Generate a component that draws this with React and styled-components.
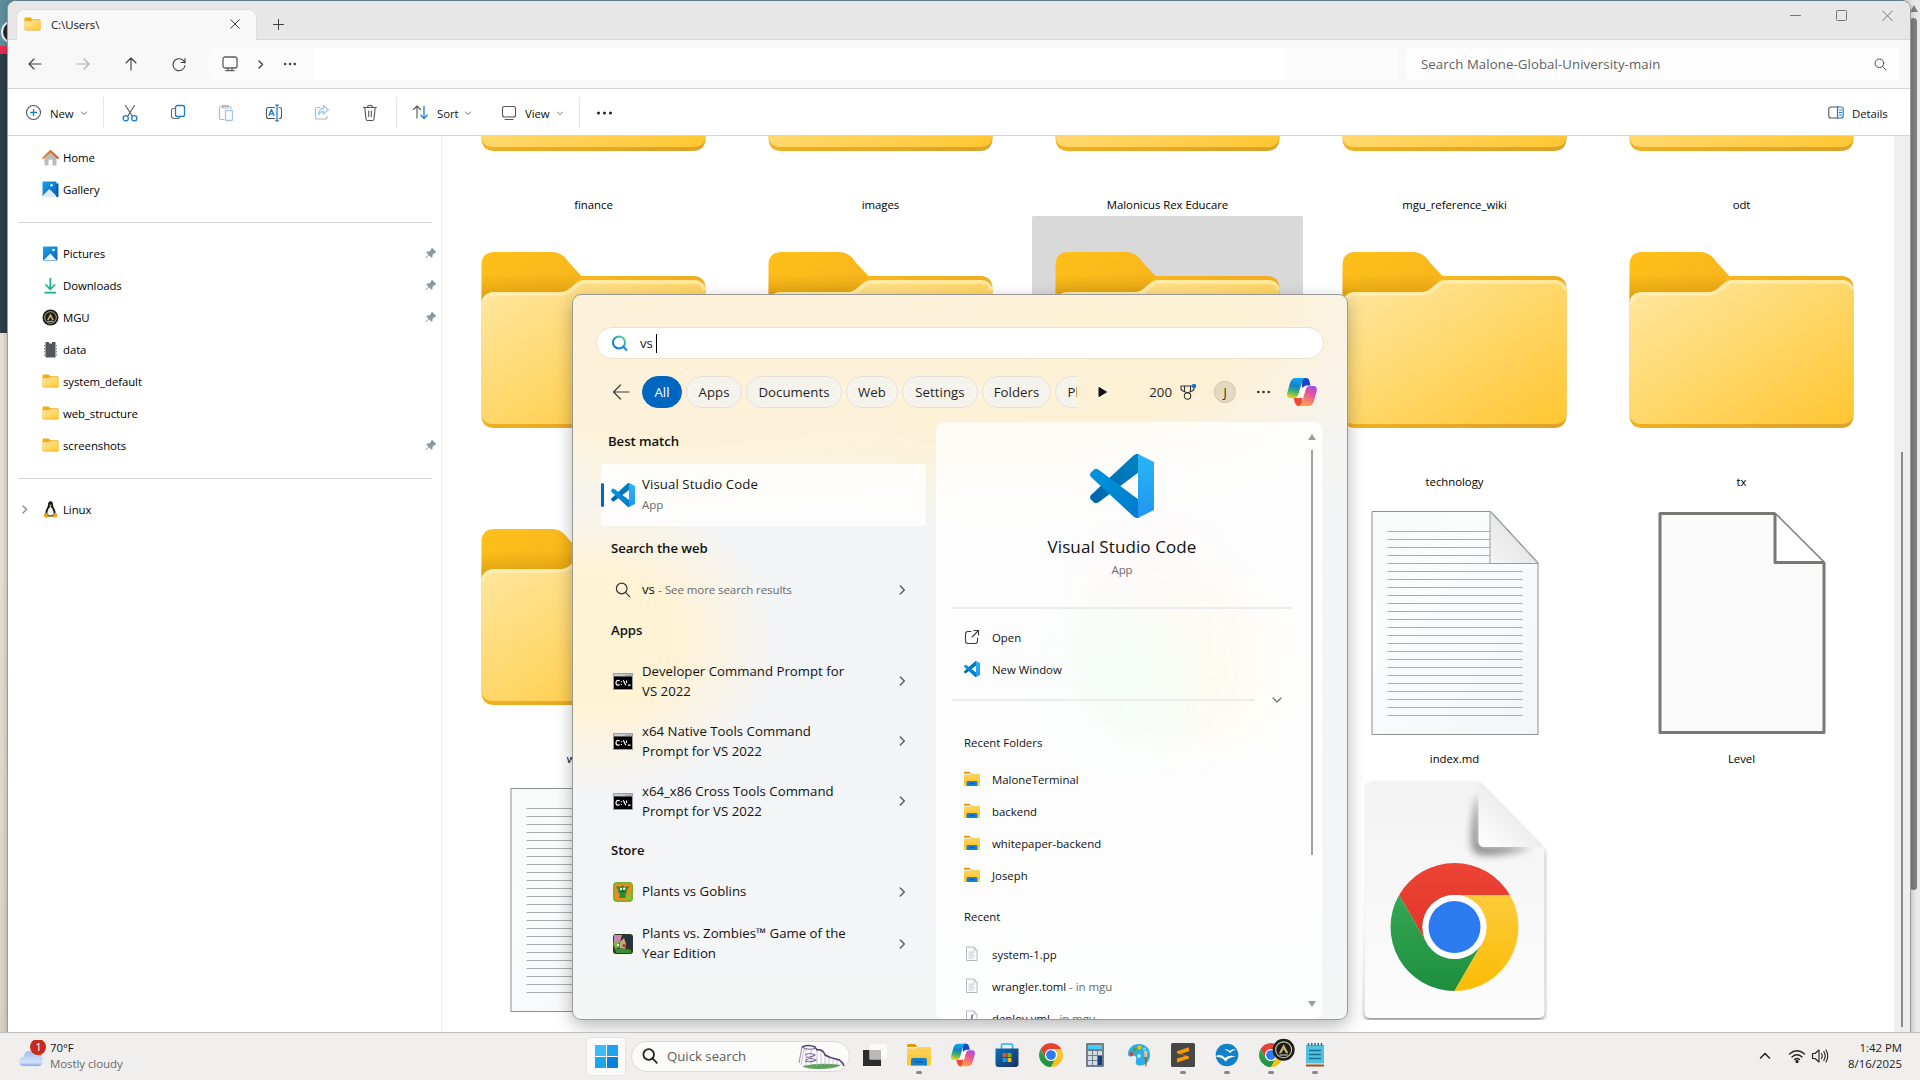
import React from "react";
import styled, { createGlobalStyle } from "styled-components";

const Global = createGlobalStyle`
  * { box-sizing: border-box; }
  html, body { margin: 0; padding: 0; overflow: hidden; }
  body { font-family: "Open Sans", "Noto Sans", sans-serif; font-size: 11.4px; color: #111; }
  svg { display: block; flex: none; }
`;

/* ---------- desktop ---------- */
const Desktop = styled.div`
  width: 1920px; height: 1080px; display: flex; flex-direction: column; overflow: hidden;
`;
const Stage = styled.main`
  position: relative; flex: 1; overflow: hidden; display: flex; justify-content: space-between;
  background: linear-gradient(#5b8f9c 0 46px, #e2304f 46px 54px, #2c3e47 54px 333px, #e6dfd3 333px 560px, #d9d4c6 100%);
`;
const Emblem = styled.div`
  width: 24px; height: 24px; margin: 20px 0 0 1px; border-radius: 50%;
  background: #2a2a2a; border: 2px solid #eee;
`;
const PageScroll = styled.div`
  width: 16px; background: #e9e9e9; padding: 5px 3px 0 6px;
`;
const PageThumb = styled.div`
  width: 7px; height: 872px; margin-top: 6px; border-radius: 4px; background: #808080;
`;

/* ---------- explorer window ---------- */
const Window = styled.section`
  position: absolute; left: 7px; top: 0; width: 1904px; height: 1060px;
  border: 1px solid #9c9c9c; border-top-color: #5f808b; border-radius: 9px 9px 0 0;
  background: #fff; overflow: hidden; display: flex; flex-direction: column;
  box-shadow: 0 0 6px rgba(0,0,0,.25);
`;
const TitleBar = styled.header`
  height: 39px; flex: none; background: #e7e7e7; border-bottom: 1px solid #d6d6d6;
  display: flex; align-items: flex-end; padding-left: 8px;
`;
const Tab = styled.div`
  width: 241px; height: 31px; margin-bottom: -1px; padding: 0 16px 2px 7px; background: #f8f8f8;
  border: 1px solid #dedede; border-bottom: 0;
  border-radius: 8px 8px 0 0; display: flex; align-items: center; gap: 10px;
`;
const TabTitle = styled.span`flex: 1; letter-spacing: -.05px; padding-top: 1px;`;
const NewTab = styled.div`margin: 0 auto 9px 16px;`;
const Captions = styled.div`
  display: flex; gap: 35px; align-self: flex-start; padding: 7px 17px 0 0;
`;
const NavBar = styled.div`
  height: 49px; flex: none; background: #f8f8f8; border-bottom: 1px solid #d6d6d6;
  display: flex; align-items: center; padding: 0 11px 0 3px;
`;
const NavBtn = styled.div`width: 48px; display: flex; justify-content: center; opacity: ${p => (p.$off ? 0.4 : 1)};`;
const Address = styled.div`
  margin-left: 6px; width: 1189px; height: 32px; border-radius: 4px; background: #fcfcfc;
  display: flex; align-items: center; padding-left: 13px; gap: 18px;
`;
const AddressInput = styled.div`width: 971px; height: 32px; background: #fff;`;
const SearchBox = styled.div`
  margin-left: 8px; flex: 1; height: 32px; border-radius: 4px; background: #fdfdfd;
  display: flex; align-items: center; justify-content: space-between; padding: 0 12px 0 15px;
  font-size: 13.2px; color: #616161; letter-spacing: .1px;
`;
const Toolbar = styled.div`
  height: 47px; flex: none; border-bottom: 1px solid #d6d6d6; display: flex; align-items: center; padding-top: 1px;
`;
const ToolItem = styled.div`
  width: ${p => p.$w}px; padding-left: ${p => p.$pl}px; display: flex; align-items: center; gap: 8px; letter-spacing: -.1px;
  & > span { padding-top: 1px; margin-right: -2px; }
`;
const ToolIcons = styled.div`display: flex; width: 292px; padding-left: 2px;`;
const ToolBtn = styled.div`width: 48px; display: flex; justify-content: center; opacity: ${p => (p.$off ? 0.42 : 1)};`;
const Sep = styled.div`width: 1px; height: 31px; background: #e4e4e4;`;
const Body = styled.div`display: flex; flex: 1; min-height: 0;`;
const Sidebar = styled.nav`
  width: 434px; border-right: 1px solid #f1f1f1; padding-top: 5px; display: flex; flex-direction: column;
`;
const SideRow = styled.div`
  height: 32px; display: flex; align-items: center; padding: 0 4px 0 9px; color: #000; letter-spacing: -.08px;
`;
const SideLead = styled.span`width: 25px; display: flex; padding-left: 3px;`;
const SideName = styled.span`flex: 1; padding-left: 4px;`;
const SideRule = styled.div`height: 32px; padding: 17px 9px 0 10px; &::before { content: ""; display: block; height: 1px; background: #d0d0d0; }`;
const Files = styled.div`flex: 1; overflow: hidden; padding-left: 16px;`;
const Grid = styled.div`
  margin-top: -197px; display: grid; grid-template-columns: repeat(5, 271px); column-gap: 16px; grid-auto-rows: 277px;
`;
const Cell = styled.div`
  display: flex; flex-direction: column; align-items: center;
  background: ${p => (p.$on ? "#d9d9d9" : "transparent")}; border-radius: 2px;
`;
const CellName = styled.div`height: 27px; line-height: 31px; color: #000; white-space: nowrap; letter-spacing: -.05px;`;
const ScrollTrack = styled.div`width: 16px; background: #efefef; padding: 316px 0 0 7px;`;
const ScrollThumb = styled.div`width: 2px; height: 575px; background: #898989;`;

/* ---------- search flyout ---------- */
const Flyout = styled.section`
  position: absolute; left: 572px; top: 294px; width: 776px; height: 726px; overflow: hidden;
  border: 1px solid #9b9a96; border-radius: 9px; display: flex; flex-direction: column;
  box-shadow: 0 6px 18px rgba(0,0,0,.28);
  background:
    radial-gradient(ellipse 175px 150px at 25px 345px, #fff2d5 45%, rgba(255,242,213,0) 100%),
    radial-gradient(ellipse 420px 230px at 130px 0px, #fdf2d9 65%, rgba(253,242,217,0) 100%),
    radial-gradient(ellipse 400px 240px at 440px 0px, #fdf1d5 60%, rgba(253,241,213,0) 100%),
    linear-gradient(#f8f5ec 0, #f3f4f5 220px, #f4f5f5 100%);
`;
const QueryField = styled.div`
  margin: 32px 23px 0; height: 32px; flex: none; border: 1px solid #ece1c8; border-radius: 16px; background: #fff;
  display: flex; align-items: center; padding-left: 14px; font-size: 13.2px;
`;
const Query = styled.span`margin-left: 12px; width: 16px; color: #222; letter-spacing: -.2px;`;
const Caret = styled.span`width: 1px; height: 19px; background: #000;`;
const FilterBar = styled.div`
  margin-top: 17px; height: 32px; flex: none; display: flex; align-items: center; padding: 0 30px 0 39px; font-size: 13.2px; color: #1f1f1f;
`;
const Pills = styled.div`
  margin-left: 12px; width: 437px; height: 32px; overflow: hidden; display: flex; gap: 4px;
`;
const Pill = styled.div`
  flex: none; width: ${p => p.$w}px; height: 32px; border-radius: 16px; display: flex; align-items: center; justify-content: center;
  background: ${p => (p.$on ? "#0067c0" : "#f6f3ec")}; color: ${p => (p.$on ? "#fff" : "#1f1f1f")};
  border: 1px solid ${p => (p.$on ? "#0067c0" : "#e4e1dc")}; letter-spacing: .05px;
`;
const Points = styled.div`display: flex; align-items: center; gap: 8px; margin-left: 41px; width: 54px;`;
const Avatar = styled.div`
  width: 22px; height: 22px; margin-left: 11px; border-radius: 50%; background: #e4dac0; border: 1px solid #d3c9ae;
  display: flex; align-items: center; justify-content: center; font-size: 12px;
`;
const Spread = styled.div`margin-left: ${p => p.$ml}px;`;
const Panels = styled.div`flex: 1; min-height: 0; display: flex; margin-top: 14px;`;
const Results = styled.div`width: 363px; padding: 0 10px 0 28px; display: flex; flex-direction: column;`;
const GroupTitle = styled.div`
  height: ${p => p.$h}px; line-height: ${p => p.$lh || p.$h}px; padding-left: ${p => p.$pl || 10}px; flex: none;
  font-size: 13.2px; font-weight: 600; letter-spacing: -.08px; color: #111;
`;
const BestItem = styled.div`
  height: 62px; flex: none; background: rgba(255,255,255,.82); border-radius: 3px; display: flex; align-items: center;
`;
const Accent = styled.div`width: 3px; height: 24px; border-radius: 2px; background: #0067c0; margin-right: 7px;`;
const BestText = styled.div`margin: -2px 0 0 7px; font-size: 13.2px; line-height: 20px; letter-spacing: .1px;`;
const Muted = styled.span`color: ${p => p.$c || "#6a6a6a"}; font-size: 11.5px; letter-spacing: -.08px;`;
const Hit = styled.div`
  height: ${p => p.$h}px; flex: none; padding: 0 19px 0 12px; display: flex; align-items: center;
  font-size: 13.2px; line-height: 20px; letter-spacing: .02px;
`;
const HitIcon = styled.span`width: 20px; display: flex; justify-content: center;`;
const HitText = styled.span`flex: 1; padding-left: 9px; padding-bottom: ${p => p.$up || 0}px; white-space: pre-line;`;
const Preview = styled.div`
  position: relative; width: 386px; border-radius: 8px; display: flex; overflow: hidden;
  background:
    radial-gradient(circle 110px at 195px 250px, rgba(240,253,246,.75), rgba(240,253,246,0)),
    radial-gradient(circle 110px at 265px 250px, rgba(255,250,234,.8), rgba(255,250,234,0)),
    radial-gradient(circle 110px at 220px 180px, rgba(255,247,246,.8), rgba(255,247,246,0)),
    linear-gradient(rgba(255,255,255,.78), rgba(255,255,255,.84));
`;
const PreviewMain = styled.div`width: 356px; padding: 32px 0 0 16px; display: flex; flex-direction: column;`;
const Hero = styled.div`width: 340px; height: 153px; flex: none; display: flex; flex-direction: column; align-items: center;`;
const HeroName = styled.div`margin: 16px 0 2px; font-size: 17px; line-height: 26px; letter-spacing: .1px;`;
const Rule = styled.div`width: ${p => p.$w}px; height: 2px; background: #ececec; flex: none;`;
const RuleRow = styled.div`display: flex; align-items: center; height: 30px; flex: none; gap: 18px;`;
const Action = styled.div`height: 32px; flex: none; display: flex; align-items: center; padding-left: 12px; gap: 12px;`;
const Heading = styled.div`height: ${p => p.$h}px; line-height: ${p => p.$lh || p.$h}px; padding-left: 12px; flex: none;`;
const PreviewScroll = styled.div`width: 24px; margin-left: 8px; padding-top: 12px; display: flex; flex-direction: column; align-items: flex-start;`;
const PreviewThumb = styled.div`width: 2px; height: 405px; margin: 10px 0 146px 11px; background: #a2a2a2; flex: none;`;

/* ---------- taskbar ---------- */
const Taskbar = styled.footer`
  height: 48px; flex: none; display: flex; background: #f0efed; border-top: 1px solid #bfbfbf; position: relative;
`;
const Weather = styled.div`width: 586px; padding: 7px 0 0 18px; display: flex; line-height: 16px;`;
const WeatherText = styled.div`padding-left: 4px; letter-spacing: -.05px;`;
const BadgeCount = styled.text`font: 11.5px "Open Sans", sans-serif; fill: #fff;`;
const StartBtn = styled.div`
  width: 40px; height: 39px; margin-top: 4px; border-radius: 5px; background: #fafafa; border: 1px solid #e6e5e4;
  display: flex; align-items: center; justify-content: center;
`;
const TaskSearch = styled.div`
  width: 219px; height: 31px; margin: 8px 0 0 5px; border-radius: 16px; background: #fbfbfa; border: 1px solid #dcdbd9;
  display: flex; align-items: center; padding: 0 4px 1px 10px; font-size: 13.2px; color: #5d5d5d;
`;
const TaskSearchText = styled.span`flex: 1; padding-left: 9px;`;
const Apps = styled.div`display: flex; margin-left: 3px;`;
const AppSlot = styled.div`
  width: 44px; padding-top: 10px; display: flex; flex-direction: column; align-items: center;
  &::after { content: ""; width: 6px; height: 3px; margin-top: 4px; border-radius: 2px; background: ${p => (p.$run ? "#878787" : "transparent")}; }
`;
const Tray = styled.div`margin-left: auto; display: flex; align-items: flex-start; padding: 14px 18px 0 0; gap: 4px;`;
const Clock = styled.div`width: 62px; margin: -7px 0 0 7px; text-align: right; line-height: 16px; color: #222; white-space: nowrap;`;

/* ---------- drawings ---------- */
const Line = ({ d, s = 16, h, c = "#3c3c3c", w = 1.1, children }) => (
  <svg width={s} height={h || s} viewBox={`0 0 ${s} ${h || s}`} fill="none" stroke={c} strokeWidth={w} strokeLinecap="round" strokeLinejoin="round">
    {d && <path d={d} />}{children}
  </svg>
);
const Chevron = ({ c = "#6b6b6b" }) => <Line s={8} d="M1.5 3 4 5.5 6.5 3" c={c} w={1} />;
const RightChev = ({ s = 10, c = "#5f5f5f", w = 1.5 }) => <Line s={s} d={`M${s * 0.33} 1l${s * 0.4} ${s / 2 - 1}L${s * 0.33} ${s - 1}`} c={c} w={w} />;
const Dots = ({ s = 16, r = 1.2, c = "#333" }) => (
  <svg width={s} height="4" viewBox={`0 0 ${s} 4`} fill={c}><circle cx={r + 1} cy="2" r={r} /><circle cx={s / 2} cy="2" r={r} /><circle cx={s - r - 1} cy="2" r={r} /></svg>
);

const Defs = () => (
  <svg width="0" height="0" aria-hidden="true" style={{ position: "absolute" }}>
    <defs>
      <linearGradient id="fBack" x1="0" y1="0" x2="1" y2="1"><stop offset="0" stopColor="#ffc01a" /><stop offset=".3" stopColor="#f7b61c" /><stop offset="1" stopColor="#dda02a" /></linearGradient>
      <linearGradient id="fFront" x1="0" y1="0" x2="1" y2="1"><stop offset="0" stopColor="#ffe8a3" /><stop offset="1" stopColor="#ffc631" /></linearGradient>
      <linearGradient id="fShade" x1="0" y1="0" x2="0" y2="1"><stop offset="0" stopColor="#c98a0a" stopOpacity="0" /><stop offset="1" stopColor="#c28508" stopOpacity=".65" /></linearGradient>
      <linearGradient id="page" x1="0" y1="0" x2="1" y2="1"><stop offset="0" stopColor="#f8f9f9" /><stop offset=".3" stopColor="#fbfcfc" /><stop offset="1" stopColor="#f3f5f8" /></linearGradient>
      <linearGradient id="curl" x1="0" y1="1" x2="1" y2="0"><stop offset="0" stopColor="#f6f6f6" /><stop offset="1" stopColor="#d8d8d8" /></linearGradient>
      <linearGradient id="cPage" x1="0" y1="0" x2="0" y2="1"><stop offset="0" stopColor="#f3f3f3" /><stop offset="1" stopColor="#fcfcfc" /></linearGradient>
      <linearGradient id="cCurl" x1="0" y1="1" x2="1" y2="0"><stop offset="0" stopColor="#ffffff" /><stop offset="1" stopColor="#dcdcdc" /></linearGradient>
      <linearGradient id="cR" x1="0" y1="0" x2="0" y2="1"><stop offset="0" stopColor="#ee4436" /><stop offset="1" stopColor="#df3428" /></linearGradient>
      <linearGradient id="cG" x1="0" y1="0" x2="0" y2="1"><stop offset="0" stopColor="#34a853" /><stop offset="1" stopColor="#1e8e3e" /></linearGradient>
      <linearGradient id="cY" x1="0" y1="0" x2="0" y2="1"><stop offset="0" stopColor="#fdcb3a" /><stop offset="1" stopColor="#fcbc05" /></linearGradient>
      <linearGradient id="vsR" x1="0" y1="0" x2="0" y2="1"><stop offset="0" stopColor="#29b6f6" /><stop offset="1" stopColor="#2196ef" /></linearGradient>
      <linearGradient id="vsM" x1="0" y1="0" x2="1" y2="1"><stop offset="0" stopColor="#0095dc" /><stop offset="1" stopColor="#007acc" /></linearGradient>
      <linearGradient id="vsD" x1="0" y1="1" x2="1" y2="0"><stop offset="0" stopColor="#0065a9" /><stop offset="1" stopColor="#0083c4" /></linearGradient>
      <linearGradient id="bing" x1="0" y1="1" x2="1" y2="0"><stop offset="0" stopColor="#0a6bd8" /><stop offset=".5" stopColor="#1198d5" /><stop offset="1" stopColor="#5fe08a" /></linearGradient>
      <linearGradient id="cpA" x1=".3" y1="0" x2=".1" y2="1"><stop offset="0" stopColor="#10a5f0" /><stop offset=".35" stopColor="#1680c8" /><stop offset=".62" stopColor="#3aae76" /><stop offset="1" stopColor="#ffd60a" /></linearGradient>
      <linearGradient id="cpB" x1=".8" y1="0" x2=".4" y2="1"><stop offset="0" stopColor="#a04fe8" /><stop offset=".4" stopColor="#e8549a" /><stop offset="1" stopColor="#ffa24a" /></linearGradient>
      <linearGradient id="pic" x1="0" y1="0" x2="1" y2="1"><stop offset="0" stopColor="#1ca4ea" /><stop offset="1" stopColor="#0a5fb8" /></linearGradient>
      <linearGradient id="home" x1="0" y1="0" x2="1" y2="0"><stop offset="0" stopColor="#f08a2c" /><stop offset="1" stopColor="#d4541c" /></linearGradient>
      <linearGradient id="cloud" x1="0" y1="0" x2="0" y2="1"><stop offset="0" stopColor="#9dbcf0" /><stop offset=".75" stopColor="#d3e3fb" /><stop offset="1" stopColor="#7fa9e8" /></linearGradient>
      <linearGradient id="store" x1="0" y1="0" x2="1" y2="1"><stop offset="0" stopColor="#0b6fc0" /><stop offset="1" stopColor="#1d2f5e" /></linearGradient>
      <filter id="soft" x="-50%" y="-50%" width="200%" height="200%"><feGaussianBlur stdDeviation="4" /></filter>
      <filter id="soft2" x="-20%" y="-20%" width="140%" height="140%"><feGaussianBlur stdDeviation="2" /></filter>
    </defs>
  </svg>
);

const FolderBig = () => (
  <svg width="256" height="250" viewBox="-15.5 -36 256 250">
    <path d="M0 13C0 4 5 0 13 0H70C78 0 83 4 87 10L100 24H212C220 24 224 29 224 37V163C224 172 219 176 211 176H13C5 176 0 172 0 163Z" fill="url(#fBack)" />
    <path d="M0 22H99L94 31 84 40H10Q1 41 0 52Z" fill="url(#fShade)" />
    <path d="M0 54C0 45 5 40 13 40H77C84 40 87 38 91 34L95 31Q98 28 103 28H213C220 28 224 33 224 40V160C224 168 220 172 212 172H12C4 172 0 168 0 160Z" fill="url(#fFront)" />
    <path d="M1 52C1 46 6 42 13 42H77C85 42 88 40 92 36L96 33Q99 30 103 30H213C218 30 222 33 223 38" fill="none" stroke="#fff3c4" strokeOpacity=".6" strokeWidth="3.5" />
  </svg>
);
const TextPage = () => (
  <svg width="256" height="250" viewBox=".5 0 256 250">
    <path d="M45.5 18.5H164.5L211.500 69.500V241.500H45.500Z" fill="url(#page)" stroke="#8d9090" />
    {Array.from({ length: 24 }, (_, i) => (
      <path key={i} d={`M61 ${38.500 + i * 8}H${i < 4 ? 163 : 196}`} stroke="#a9abac" />
    ))}
    <path d="M163.500 18.500V70.500H211.500Z" fill="url(#curl)" stroke="#9a9c9c" />
  </svg>
);
const BlankPage = () => (
  <svg width="256" height="250" viewBox=".5 0 256 250">
    <path d="M46.500 20.500H161L210.500 70V239.500H46.500Z" fill="#fafafa" stroke="#787874" strokeWidth="3" strokeLinejoin="round" />
    <path d="M161.500 21V69.500H210" fill="#fff" stroke="#787874" strokeWidth="3" strokeLinejoin="round" />
  </svg>
);
const ChromeMark = () => (
  <g>
    <path d="M-55.400-32A64 64 0 0 1 55.400-32H0A32 32 0 0 0-27.700 16Z" fill="url(#cR)" />
    <path d="M-55.400-32-27.700 16A32 32 0 0 0 27.700 16L0 64A64 64 0 0 1-55.400-32Z" fill="url(#cG)" />
    <path d="M55.400-32A64 64 0 0 1 0 64L27.700 16A32 32 0 0 0 0-32Z" fill="url(#cY)" />
    <circle r="32" fill="#fff" /><circle r="26" fill="#2c7bf0" />
  </g>
);
const ChromePage = () => (
  <svg width="256" height="250" viewBox=".5 0 256 250">
    <path d="M44 14H152L218 82V244Q218 251 212 251H44Q38 251 38 244Z" fill="#000" opacity=".4" filter="url(#soft2)" />
    <path d="M38 18Q38 12 44 12H149Q154 12 157 15L215 74Q218 77 218 82V242Q218 248 212 248H44Q38 248 38 242Z" fill="url(#cPage)" />
    <path d="M152 22V77H206Q180 84 158 84 146 84 146 74 146 45 152 22Z" fill="#000" opacity=".6" filter="url(#soft)" />
    <path d="M152 13V71Q152 77 158 77H216Q216 75 213 72L157 15Q155 13 152 13Z" fill="url(#cCurl)" />
    <g transform="translate(128 157)"><ChromeMark /></g>
  </svg>
);
const VsCode = ({ s }) => (
  <svg width={s} height={s} viewBox="0 0 64 64">
    <path d="M1 41Q-1 43.500 1 45.500L4 48.500Q6.500 50 9 48L49 18V0Q46-.500 43.500 1.500Z" fill="url(#vsD)" />
    <path d="M1 23Q-1 20.500 1 18.500L4 15.500Q6.500 14 9 16L49 46V64Q46 64.500 43.500 62.500Z" fill="url(#vsM)" />
    <path d="M48 0 64 8V56L48 64Z" fill="url(#vsR)" />
  </svg>
);
const Copilot = ({ w, h }) => (
  <svg width={w} height={h} viewBox="0 0 30 28">
    <path d="M15 0H19Q21.500 0 22.500 3L23.500 7.500H19Q16 8 15 11Z" fill="#1b45c9" />
    <path d="M15 28H11Q9 28 8 25L6.500 20H12Q14.500 19 15.500 16Z" fill="#ee4b3c" />
    <path d="M8.500 0H18.500Q16 .5 15 4L11.500 16Q10.500 20 7 20H3.500Q-.5 20 .2 15L3 5Q4.500 0 8.500 0Z" fill="url(#cpA)" />
    <path d="M21.500 28H11.500Q14 27.500 15 24L18.500 12Q19.500 8 23 8H26.500Q30.500 8 29.800 13L27 23Q25.500 28 21.500 28Z" fill="url(#cpB)" />
    <path d="M16.500 9.500Q18 8 20 8 19 9 18.300 12L16 19.500Q15 20 12.500 20 11 20 9.500 19.800 11 18.500 11.600 16.500L13.500 10Z" fill="#fff8ee" />
  </svg>
);
const FolderSmall = () => (
  <svg width="17" height="16" viewBox="0 0 17 16"><path d="M.5 2.500Q.5 1.500 1.500 1.500H6.500Q7.500 1.500 8 3.300H15.500Q16.500 3.300 16.500 4.500V14H.5Z" fill="#f2ac17" /><path d="M.5 6Q.5 5.300 1.500 5.300H6.500L8.500 4.300H15.700Q16.500 4.300 16.500 5V13.200Q16.500 14 15.700 14H1.300Q.5 14 .5 13.200Z" fill="url(#fFront)" /><path d="M1 14.200H16" stroke="#e9a820" strokeWidth=".7" /></svg>
);
const ExplorerIcon = ({ s = 24 }) => (
  <svg width={s} height={s} viewBox="0 0 24 24">
    <path d="M0 2.500Q0 1 1.500 1H8L10.500 4H0Z" fill="#dd9a08" /><path d="M0 5.500H9L11 4H22.500Q24 4 24 5.500V21Q24 22.500 22.500 22.500H1.500Q0 22.500 0 21Z" fill="#ffd050" />
    <path d="M0 12V21Q0 22.500 1.500 22.500H22.500Q24 22.500 24 21V12Z" fill="#fdc533" opacity=".7" />
    <path d="M4 22.500V17Q4 15 6 15H18Q20 15 20 17V22.500Z" fill="#1580d0" /><path d="M8 18.800H16" stroke="#0b5a9d" strokeWidth="1.500" />
  </svg>
);
const HomeIcon = () => (
  <svg width="17" height="17" viewBox="0 0 17 17"><path d="M2.500 8 8.500 2.500 14.500 8V16.500H10.500V11.500Q10.500 10.500 8.500 10.500T6.500 11.500V16.500H2.500Z" fill="#b9bbbd" /><path d="M1.200 9 8.500 2 15.800 9" fill="none" stroke="url(#home)" strokeWidth="2" strokeLinejoin="round" strokeLinecap="round" /></svg>
);
const GalleryIcon = () => (
  <svg width="17" height="17" viewBox="0 0 17 17"><path d="M3 2.500H16.500V16H3Z" fill="#0b5cad" /><path d="M.5.5H14.500V15H.5Z" fill="url(#pic)" /><path d="M1 14.500 7.300 8 14 14.500 14.500 16.500 3 16.500Z" fill="#dcecfc" /><circle cx="9.500" cy="4.300" r="1.200" fill="#fff" /></svg>
);
const PicturesIcon = () => (
  <svg width="17" height="17" viewBox="0 0 17 17"><rect x="1" y="1.500" width="14.500" height="14" rx="1" fill="url(#pic)" /><path d="M2 15 8.300 8.500 14.500 15Z" fill="#eef7ff" /><circle cx="11.500" cy="5" r="1.300" fill="#fff" /></svg>
);
const DownloadIcon = () => (
  <svg width="17" height="17" viewBox="0 0 17 17" fill="none" stroke="#19b08a" strokeWidth="1.700"><path d="M8.300 1V12M3.500 7.500 8.300 12.300 13.100 7.500M2.500 15.700H14" /></svg>
);
const Seal = ({ s = 17 }) => (
  <svg width={s} height={s} viewBox="0 0 17 17"><circle cx="8.500" cy="8.500" r="8" fill="#1c1c1a" /><circle cx="8.500" cy="8.500" r="5.800" fill="none" stroke="#d7cfa8" strokeWidth=".8" /><path d="M5 11 8.500 4.500 12 11H10.300L8.500 8 6.700 11Z" fill="#c8b670" /><path d="M5.500 12.300H11.500" stroke="#ddd" strokeWidth=".8" /></svg>
);
const ChipIcon = () => (
  <svg width="17" height="17" viewBox="0 0 17 17"><path d="M3.500 1H7V2.500H10V1H13.500V16.500H3.500Z" fill="#53565a" /><path d="M2.700 4V15M14.300 4V15" stroke="#8d9196" strokeWidth="1.400" strokeDasharray="1.500 1.500" /></svg>
);
const TuxIcon = () => (
  <svg width="17" height="17" viewBox="0 0 17 17"><path d="M8.500.3Q11 .3 11 4C11 6 14 9 13.600 13L11.500 15.500H5.500L3.400 13C3 9 6 6 6 4Q6 .3 8.500.3Z" fill="#161616" /><path d="M8.500 5.200C10 7 12 9.500 11.600 13Q8.500 16 5.400 13C5 9.500 7 7 8.500 5.200Z" fill="#f6f6f6" /><path d="M6.900 3.800H10.100L8.500 5.700Z" fill="#f2b01e" /><path d="M2.300 12.300 4 11.500 7 15.200 5.500 16.700 1.800 15.700ZM14.700 12.300 13 11.500 10 15.200 11.500 16.700 15.200 15.700Z" fill="#e2a51c" /></svg>
);
const Pin = () => (
  <svg width="12" height="12" viewBox="0 0 12 12" fill="#8f979e"><path d="M7 .8 11.300 5 10 6 9.500 5.900 7.500 8 7.500 10 6.500 10.800 3.900 8.200 1.200 11.200.5 10.700 3.400 7.700 1.200 5.500 2 4.600 4.200 4.500 6.200 2.500 6 2Z" /></svg>
);
const CmdIcon = () => (
  <svg width="20" height="17" viewBox="0 0 20 17"><rect width="20" height="17" fill="#9a9fa4" /><rect x="1" y="1" width="18" height="2.500" fill="#c4cbd3" /><path d="M12.500 2.200H14M15 2.200H16.500M17.300 2.200H18.500" stroke="#6d7680" strokeWidth="1" /><rect x="1" y="3.500" width="18" height="12.500" fill="#000" /><path d="M6.500 8Q5.800 7.200 4.800 7.300 3 7.500 3 9.700 3 12 4.800 12.200 5.800 12.200 6.500 11.500M8.500 8.300V9.300M8.500 11V12M10.300 7.300 12.800 12.200M13.500 7.500V10M15 12.200H17.500" stroke="#fff" strokeWidth="1.200" fill="none" /></svg>
);
const GoblinIcon = () => (
  <svg width="20" height="20" viewBox="0 0 20 20"><rect width="20" height="20" rx="4" fill="#6db52a" /><rect x="1.500" y="1.500" width="17" height="17" rx="3" fill="#f08a1c" /><path d="M3 4 7 5Q9.500 2 12 5L16.500 4 13.500 9Q14.500 11 12.500 12L13 16H6L7 12Q4.500 11 5.500 9Z" fill="#2b8a3e" /><circle cx="8" cy="7" r="1.200" fill="#eaf6d8" /><circle cx="11.200" cy="6.700" r="1.200" fill="#dff" /><path d="M7.500 9.500H12" stroke="#174f24" /><path d="M13 13 18 12 17.500 18H12Z" fill="#7ac52f" /></svg>
);
const ZombieIcon = () => (
  <svg width="20" height="20" viewBox="0 0 20 20"><rect width="20" height="20" rx="3" fill="#2c3a25" /><path d="M1 1H9L7 8 1 10Z" fill="#c988b0" /><path d="M0 9 6 7 7 13 2 15Z" fill="#7fae4b" /><path d="M7 8 11 4 13 10 12 15H7Z" fill="#c7a67a" /><path d="M13 2H19V14L15 12Z" fill="#28304f" /><path d="M2 15 9 14 18 16V19H3Z" fill="#3f8a35" /><circle cx="11" cy="11.500" r="1.500" fill="#b22f2c" /><circle cx="5" cy="11" r="1" fill="#fff" /></svg>
);
const DocIcon = ({ mark }) => (
  <svg width="16" height="16" viewBox="0 0 16 16" fill="none" stroke="#b5b8ba" strokeWidth="1"><path d="M2.500 1H10L13 4V14.500H2.500Z" fill="#fff" /><path d="M10 1V4H13" />{mark ? <path d="M8.500 4.500 7.500 9M7.200 11V12" stroke="#7a4fa0" strokeWidth="1.500" /> : <path d="M4.500 6H11M4.500 8H9.500M4.500 10H11M4.500 12H10" strokeWidth=".8" />}</svg>
);
const Magnifier = ({ s = 16, c = "#333", w = 1.200 }) => (
  <svg width={s} height={s} viewBox="0 0 16 16" fill="none" stroke={c} strokeWidth={w} strokeLinecap="round"><circle cx="6.700" cy="6.500" r="5.300" /><path d="M10.600 10.400 14.800 14.800" /></svg>
);

const blue = "#1b7fd0";
const CutIcon = () => <Line s={16} h={18}><path d="M3.500 1.500 10.500 12.500M12.500 1.500 5.500 12.500" stroke="#555" /><circle cx="3.700" cy="14.300" r="2.600" stroke={blue} strokeWidth="1.300" /><circle cx="12.300" cy="14.300" r="2.600" stroke={blue} strokeWidth="1.300" /></Line>;
const CopyIcon = () => <Line s={16}><path d="M4.500 4.500H3Q1.500 4.500 1.500 6.500V12Q1.500 14.500 4 14.500H8Q9.500 14.500 9.500 13" stroke="#666" /><rect x="5.500" y="1.500" width="9" height="11" rx="2" stroke={blue} strokeWidth="1.300" /></Line>;
const PasteIcon = () => <Line s={16} h={18}><path d="M6 15.500H3Q1.500 15.500 1.500 14V4Q1.500 2.500 3 2.500H11.500Q13 2.500 13 4V5M4.500 1.500H10V4H4.500Z" stroke="#555" /><rect x="7.500" y="6.500" width="7" height="10" rx="1" stroke={blue} strokeWidth="1.300" /></Line>;
const RenameIcon = () => <Line s={18}><path d="M9.500 3.500H3.500Q1.500 3.500 1.500 5.500V12.500Q1.500 14.500 3.500 14.500H9.500M14.500 3.500Q16.500 3.500 16.500 5.500V12.500Q16.500 14.500 14.500 14.500" stroke="#555" /><path d="M12 1.500V16.500M10.500 1.200H13.500M10.500 16.800H13.500M4 11.500 6.500 5.500 9 11.500M4.800 9.800H8.200" stroke={blue} strokeWidth="1.300" /></Line>;
const ShareIcon = () => <Line s={16} h={17}><path d="M6 3.500H3.500Q1.500 3.500 1.500 5.500V13Q1.500 15 3.500 15H11Q13 15 13 13V12" stroke="#555" /><path d="M9.500 1.500 14.500 5.800 9.500 10V7.500Q6 7.500 4.500 11 4.500 5 9.500 4.200Z" stroke={blue} strokeWidth="1.300" /></Line>;
const TrashIcon = () => <Line s={16} h={18}><path d="M1.500 3.500H14.500M5.500 3.500Q5.500 1.200 8 1.200 10.500 1.200 10.500 3.500M2.800 3.500 4 15Q4.200 16.500 5.500 16.500H10.500Q11.800 16.500 12 15L13.200 3.500M6.700 7V12.500M9.300 7V12.500" stroke="#555" /></Line>;
const SortIcon = () => <Line s={17}><path d="M5 14V2M1.500 5.500 5 2 8.500 5.500" stroke="#555" /><path d="M12 2.500V14.500M8.800 11.300 12 14.500 15.200 11.300" stroke={blue} strokeWidth="1.300" /></Line>;
const ViewIcon = () => <Line s={16}><rect x="1.500" y="1.500" width="13" height="10.500" rx="2" stroke="#555" /><path d="M4 14.500H12" stroke="#555" /></Line>;
const MonitorIcon = () => <Line s={16} c="#5c5c5c" w={1.300}><rect x="1" y="1" width="14" height="11" rx="2" /><path d="M6 12.500V14.500M10 12.500V14.500M4 14.700H12" /></Line>;
const DetailsIcon = () => <Line s={16}><path d="M10.500 2H3Q.8 2 .8 4V11Q.8 13 3 13H10.500" stroke="#555" /><path d="M9.500 2H13Q15.200 2 15.200 4V11Q15.200 13 13 13H9.500ZM11.300 5H13.500M11.300 7.500H13.500M11.300 10H13.500" stroke={blue} strokeWidth="1.200" /></Line>;

const Coaster = () => (
  <svg width="47" height="25" viewBox="0 0 47 25" fill="none">
    <path d="M4 22Q24 18 43 21 38 25 20 25 8 25 4 22Z" fill="#5aa55b" />
    <path d="M3 21 6 5M8 22V5M13 22V5M19 22V6M23 21V7M27 21V12M31 21V14M35 21V15M39 21V16M43 21V18" stroke="#c3b0cc" strokeWidth=".8" />
    <path d="M1 19 4 3" stroke="#a98fb4" strokeWidth="1.200" />
    <path d="M4 3Q10 0 17 3L19 6Q25 5 27 11 32 14 38 15 44 16 46 22" stroke="#4a3d6b" strokeWidth="1.500" />
    <path d="M4 3Q10 7 18 4M7 11Q12 8 17 11 13 14 8 13M8 16Q13 13 18 16 13 19 7 17" stroke="#75678f" strokeWidth="1.100" />
  </svg>
);
const WindowsLogo = () => (
  <svg width="23" height="23" viewBox="0 0 23 23"><path d="M0 0H11V11H0Z" fill="#3cbcf7" /><path d="M12 12H23V23H12Z" fill="#0a80da" /><path d="M12 0H23V11H12ZM0 12H11V23H0Z" fill="#1fa3ec" /></svg>
);
const TaskViewIcon = () => (
  <svg width="24" height="24" viewBox="0 0 24 24"><rect x="0" y="7" width="18" height="16" fill="#2c2c2c" /><rect x="6.500" y="1" width="17.500" height="15.500" fill="#fdfdfd" opacity=".75" /><rect x="6.500" y="7" width="11.500" height="9.500" fill="#b9b9b9" /></svg>
);
const StoreIcon = () => (
  <svg width="24" height="24" viewBox="0 0 24 24"><path d="M6.500 6V2.500Q6.500 1 8 1H16Q17.500 1 17.500 2.500V6" fill="none" stroke="#22b3ee" strokeWidth="1.600" /><path d="M.5 5.500H23.500V21Q23.500 24 20.500 24H3.500Q.5 24 .5 21Z" fill="url(#store)" /><path d="M7.500 10H11.500V14H7.500Z" fill="#f25022" /><path d="M12.500 10H16.500V14H12.500Z" fill="#7fba00" /><path d="M7.500 15H11.500V19H7.500Z" fill="#00a4ef" /><path d="M12.500 15H16.500V19H12.500Z" fill="#ffb900" /></svg>
);
const ChromeIcon = ({ seal }) => (
  <svg width="36" height="24" viewBox="-96 -64 192 128" overflow="visible"><ChromeMark />{seal && <g transform="translate(5 -90) scale(7.800)"><Seal s={16} /></g>}</svg>
);
const CalcIcon = () => (
  <svg width="24" height="24" viewBox="0 0 24 24"><rect x="3" y="0" width="18" height="24" rx="1" fill="#717d8a" /><rect x="5" y="2" width="14" height="4" fill="#3fd0f2" />{[0, 1, 2].map(r => [0, 1, 2].map(c => <rect key={`${r}${c}`} x={5 + c * 5} y={8 + r * 5} width="4" height="4" fill={c === 2 && r > 0 ? "#12407c" : "#d3dbe3"} />))}<rect x="15" y="13" width="4" height="9" fill="#12407c" /></svg>
);
const PaintIcon = () => (
  <svg width="24" height="24" viewBox="0 0 24 24"><path d="M12 1C5 1 1 6 1 11 1 14 4 14 6 13 9 12 10 15 9 18 8 21 10 22.500 13 22.500 19 22.500 23 18 23 12S19 1 12 1Z" fill="#2aaeea" /><circle cx="4.500" cy="11" r="2" fill="#d24a2c" /><circle cx="8" cy="6.500" r="2" fill="#4aa238" /><circle cx="12.500" cy="4.500" r="1.900" fill="#f0c21c" /><circle cx="17.500" cy="6" r="1.500" fill="#7fdcff" /><path d="M12 11V15M10 13H14" stroke="#fff" strokeWidth="1.200" /><path d="M17 8H20.500L20 14H17.500Z" fill="#e9c08a" /><path d="M17.500 14H20L19.500 23.500H18.500Z" fill="#a5601f" /></svg>
);
const SublimeIcon = () => (
  <svg width="24" height="24" viewBox="0 0 24 24"><rect width="24" height="24" rx="1.500" fill="#474747" /><path d="M6 8.200 18 4.300V8.200L9.500 11 18 13.600V15.500L6 19.500V15.600L14.500 12.900 6 10.300Z" fill="#ff9800" /></svg>
);
const OfficeIcon = () => (
  <svg width="24" height="24" viewBox="0 0 24 24"><circle cx="12" cy="12" r="11.300" fill="#1181c8" /><path d="M9.500 6.500Q12.500 5.500 14.500 8 17 5.500 21 6.500 17.500 7 15 10 13 7 9.500 6.500ZM1.500 12.500Q7 11 10 15 14 11.500 20.500 13.500 14 13.800 10.500 18.500 7 13.500 1.500 14Z" fill="#fff" /></svg>
);
const NotepadIcon = () => (
  <svg width="24" height="24" viewBox="0 0 24 24"><rect x="3" y="2" width="18" height="19" fill="#54bfe0" /><path d="M3 21H21V23.500H3Z" fill="#9a5210" /><path d="M3 20.500H21V21.500H3Z" fill="#f2f2f2" /><path d="M5.500 0V3M8.800 0V3M12 0V3M15.200 0V3M18.500 0V3" stroke="#1b7390" strokeWidth="1.500" /><path d="M6 7.500H18M6 11.500H18M6 15.500H18" stroke="#12718f" strokeWidth="1.600" /></svg>
);
const WeatherIcon = () => (
  <svg width="28" height="28" viewBox="0 0 28 28"><circle cx="19" cy="13" r="5" fill="#f19a20" /><path d="M6 26Q1 26 1 21.500 1 17.500 5.500 17 6 11 12 11 16.500 11 18 15 24.500 15 25 20.500 25 26 19.500 26Z" fill="url(#cloud)" /><circle cx="20" cy="7" r="8" fill="#c52b1e" /><BadgeCount x="20.500" y="11" textAnchor="middle">1</BadgeCount></svg>
);
const Medal = () => (
  <svg width="17" height="16" viewBox="0 0 17 16" fill="none" stroke="#333" strokeWidth="1.100"><path d="M1 2H14V5Q13.500 6.500 12 7L7.500 9 3 7Q1.500 6.500 1 5ZM4.500 2V7.200M10.500 2V7.200" /><circle cx="7.500" cy="12" r="3.200" /><circle cx="14" cy="2" r="2.200" fill="#0a78d6" stroke="none" /></svg>
);

/* ---------- data ---------- */
const sidebar = [
  ["Home", HomeIcon], ["Gallery", GalleryIcon], null,
  ["Pictures", PicturesIcon, 1], ["Downloads", DownloadIcon, 1], ["MGU", Seal, 1], ["data", ChipIcon],
  ["system_default", FolderSmall], ["web_structure", FolderSmall], ["screenshots", FolderSmall, 1], null,
  ["Linux", TuxIcon, 0, 1],
];
const files = [
  ["finance"], ["images"], ["Malonicus Rex Educare"], ["mgu_reference_wiki"], ["odt"],
  [""], [""], ["", FolderBig, true], ["technology"], ["tx"],
  ["workflows"], [""], [""], ["index.md", TextPage], ["Level", BlankPage],
  ["readme.md", TextPage], ["public_ledger.html", TextPage], ["style.html", TextPage], ["team.html", ChromePage],
];
const pills = [["All", 40], ["Apps", 56], ["Documents", 96], ["Web", 52], ["Settings", 76], ["Folders", 69], ["Photos", 68]];
const devTools = ["Developer Command Prompt for\nVS 2022", "x64 Native Tools Command\nPrompt for VS 2022", "x64_x86 Cross Tools Command\nPrompt for VS 2022"];
const taskApps = [
  [TaskViewIcon], [ExplorerIcon, 1], [() => <Copilot w={24} h={24} />], [StoreIcon], [ChromeIcon], [CalcIcon], [PaintIcon],
  [SublimeIcon, 1], [OfficeIcon, 1], [() => <ChromeIcon seal />, 1], [NotepadIcon, 1],
];

const Explorer = () => (
  <Window>
    <TitleBar>
      <Tab><FolderSmall /><TabTitle>C:\Users\</TabTitle><Line s={10} d="M.8.8 9.200 9.200M9.200.8.8 9.200" w={1} /></Tab>
      <NewTab><Line s={11} d="M5.500.5V10.500M.5 5.500H10.500" w={1} /></NewTab>
      <Captions>
        <Line s={11} h={14} d="M.5 7.500H10.500" c="#777" w={1} />
        <Line s={11} h={14} c="#777" w={1}><rect x=".5" y="2.500" width="10" height="10" rx="1" /></Line>
        <Line s={11} h={14} d="M.8 3 10.200 12.500M10.200 3 .8 12.500" c="#777" w={1} />
      </Captions>
    </TitleBar>
    <NavBar>
      <NavBtn><Line d="M2 8H14M7 3 2 8 7 13" /></NavBtn>
      <NavBtn $off><Line d="M2 8H14M9 3 14 8 9 13" /></NavBtn>
      <NavBtn><Line d="M8 14V2M3 7 8 2 13 7" /></NavBtn>
      <NavBtn><Line d="M13.800 7A6 6 0 1 0 14 9.500M14 2.500V6.500H10" /></NavBtn>
      <Address><MonitorIcon /><RightChev s={9} c="#333" w={1.200} /><Dots s={14} /><AddressInput /></Address>
      <SearchBox><span>Search Malone-Global-University-main</span><Magnifier s={13} c="#444" /></SearchBox>
    </NavBar>
    <Toolbar>
      <ToolItem $w={95} $pl={17}>
        <Line s={17}><circle cx="8.500" cy="8.500" r="7" stroke="#555" /><path d="M8.500 5.500V11.500M5.500 8.500H11.500" stroke={blue} strokeWidth="1.300" /></Line>
        <span>New</span><Chevron />
      </ToolItem>
      <Sep />
      <ToolIcons>
        <ToolBtn><CutIcon /></ToolBtn><ToolBtn><CopyIcon /></ToolBtn><ToolBtn $off><PasteIcon /></ToolBtn>
        <ToolBtn><RenameIcon /></ToolBtn><ToolBtn $off><ShareIcon /></ToolBtn><ToolBtn><TrashIcon /></ToolBtn>
      </ToolIcons>
      <Sep />
      <ToolItem $w={87} $pl={15}><SortIcon /><span>Sort</span><Chevron /></ToolItem>
      <ToolItem $w={95} $pl={17}><ViewIcon /><span>View</span><Chevron /></ToolItem>
      <Sep />
      <ToolItem $w={1200} $pl={16}><Dots s={17} r={1.500} c="#222" /></ToolItem>
      <ToolItem $w={82} $pl={0} style={{ marginLeft: "auto" }}><DetailsIcon /><span>Details</span></ToolItem>
    </Toolbar>
    <Body>
      <Sidebar>
        {sidebar.map((r, i) => {
          if (!r) return <SideRule key={i} />;
          const [name, Icon, pinned, open] = r;
          return (
            <SideRow key={name}>
              <SideLead>{open ? <RightChev s={9} c="#888" w={1.300} /> : null}</SideLead>
              <Icon /><SideName>{name}</SideName>{pinned ? <Pin /> : null}
            </SideRow>
          );
        })}
      </Sidebar>
      <Files>
        <Grid>
          {files.map(([name, Icon = FolderBig, on], i) => (
            <Cell key={i} $on={on}><Icon /><CellName>{name}</CellName></Cell>
          ))}
        </Grid>
      </Files>
      <ScrollTrack><ScrollThumb /></ScrollTrack>
    </Body>
  </Window>
);

const Search = () => (
  <Flyout>
    <QueryField>
      <svg width="17" height="17" viewBox="0 0 17 17" fill="none" stroke="url(#bing)" strokeWidth="2" strokeLinecap="round"><circle cx="8" cy="7.500" r="6" /><path d="M12.300 11.800 15.500 15" stroke="#1487dc" /></svg>
      <Query>vs</Query><Caret />
    </QueryField>
    <FilterBar>
      <Line s={18} d="M1.500 9H17M8.500 2 1.500 9 8.500 16" w={1.200} />
      <Pills>{pills.map(([t, w], i) => <Pill key={t} $w={w} $on={i === 0}>{t}</Pill>)}</Pills>
      <Spread $ml={21}><svg width="10" height="12" viewBox="0 0 10 12"><path d="M1 1.500 8.500 6 1 10.500Z" fill="#111" stroke="#111" strokeLinejoin="round" /></svg></Spread>
      <Points><span>200</span><Medal /></Points>
      <Avatar>J</Avatar>
      <Spread $ml={20}><Dots s={15} r={1.300} /></Spread>
      <Spread $ml={16}><Copilot w={30} h={28} /></Spread>
    </FilterBar>
    <Panels>
      <Results>
        <GroupTitle $h={42} $lh={38} $pl={7}>Best match</GroupTitle>
        <BestItem><Accent /><VsCode s={24} /><BestText>Visual Studio Code<br /><Muted>App</Muted></BestText></BestItem>
        <GroupTitle $h={44}>Search the web</GroupTitle>
        <Hit $h={40}><HitIcon><Magnifier /></HitIcon><HitText $up={2}>vs <Muted>- See more search results</Muted></HitText><RightChev /></Hit>
        <GroupTitle $h={41}>Apps</GroupTitle>
        {devTools.map(t => <Hit key={t} $h={60}><HitIcon><CmdIcon /></HitIcon><HitText>{t}</HitText><RightChev /></Hit>)}
        <GroupTitle $h={39}>Store</GroupTitle>
        <Hit $h={44}><HitIcon><GoblinIcon /></HitIcon><HitText $up={2}>Plants vs Goblins</HitText><RightChev /></Hit>
        <Hit $h={60}><HitIcon><ZombieIcon /></HitIcon><HitText $up={2}>{"Plants vs. Zombies™ Game of the\nYear Edition"}</HitText><RightChev /></Hit>
      </Results>
      <Preview>
        <PreviewMain>
          <Hero><VsCode s={64} /><HeroName>Visual Studio Code</HeroName><Muted>App</Muted></Hero>
          <Rule $w={340} />
          <Heading $h={12} />
          <Action><Line s={16}><path d="M7 2.500H4Q1.500 2.500 1.500 5V12Q1.500 14.500 4 14.500H11Q13.500 14.500 13.500 12V9M10 1.500H14.500V6M14.500 1.500 8 8" /></Line>Open</Action>
          <Action><VsCode s={16} />New Window</Action>
          <RuleRow><Rule $w={302} /><Line s={10} h={6} d="M1 1 5 5 9 1" c="#666" /></RuleRow>
          <Heading $h={48} $lh={55}>Recent Folders</Heading>
          {["MaloneTerminal", "backend", "whitepaper-backend", "Joseph"].map(t => <Action key={t}><ExplorerIcon s={16} />{t}</Action>)}
          <Heading $h={47} $lh={52}>Recent</Heading>
          <Action><DocIcon />system-1.pp</Action>
          <Action><DocIcon /><span>wrangler.toml <Muted>- in mgu</Muted></span></Action>
          <Action><DocIcon mark /><span>deploy.yml <Muted>- in mgu</Muted></span></Action>
        </PreviewMain>
        <PreviewScroll>
          <Spread $ml={8}><svg width="8" height="6" viewBox="0 0 8 6"><path d="M4 0 8 6H0Z" fill="#9c9c9c" /></svg></Spread>
          <PreviewThumb />
          <Spread $ml={8}><svg width="8" height="6" viewBox="0 0 8 6"><path d="M4 6 8 0H0Z" fill="#9c9c9c" /></svg></Spread>
        </PreviewScroll>
      </Preview>
    </Panels>
  </Flyout>
);

export default function App() {
  return (
    <Desktop>
      <Global />
      <Defs />
      <Stage>
        <Emblem />
        <PageScroll>
          <svg width="8" height="7" viewBox="0 0 8 7"><path d="M4 0 8 7H0Z" fill="#808080" /></svg>
          <PageThumb />
        </PageScroll>
        <Explorer />
        <Search />
      </Stage>
      <Taskbar>
        <Weather><WeatherIcon /><WeatherText>70°F<br /><Muted>Mostly cloudy</Muted></WeatherText></Weather>
        <StartBtn><WindowsLogo /></StartBtn>
        <TaskSearch><Magnifier s={16} c="#222" w={1.800} /><TaskSearchText>Quick search</TaskSearchText><Coaster /></TaskSearch>
        <Apps>{taskApps.map(([Icon, run], i) => <AppSlot key={i} $run={run}><Icon /></AppSlot>)}</Apps>
        <Tray>
          <Line s={18} d="M4.500 11 9 6.500 13.500 11" c="#222" w={1.500} />
          <Spread $ml={9}><Line s={20} h={18} c="#222" w={1.300}><path d="M2.500 7Q10 .5 17.500 7M5 10Q10 5.500 15 10M7.500 12.500Q10 10.500 12.500 12.500" /><circle cx="10" cy="14.500" r="1" fill="#222" /></Line></Spread>
          <Line s={18} d="M1.500 6.500H4L8 3V15L4 11.500H1.500ZM10.500 6.500Q12 9 10.500 11.500M12.800 4.500Q15.500 9 12.800 13.500M15 3Q18.500 9 15 15" c="#222" />
          <Clock>1:42 PM<br />8/16/2025</Clock>
        </Tray>
      </Taskbar>
    </Desktop>
  );
}
